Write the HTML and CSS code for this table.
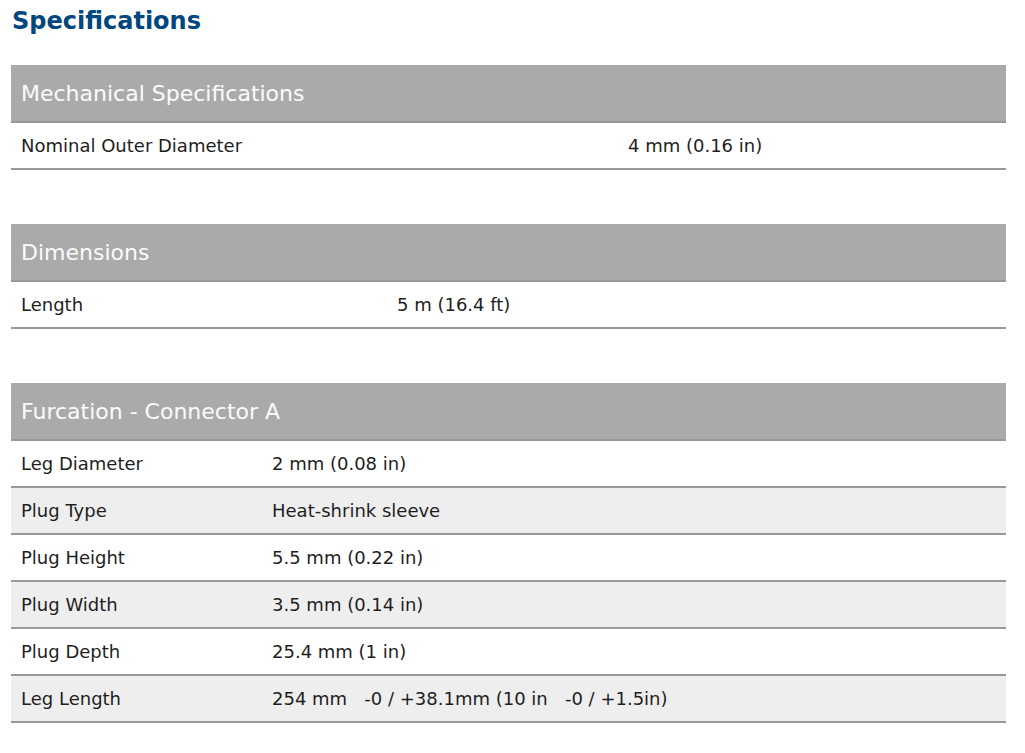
FILE: index.html
```html
<!DOCTYPE html>
<html lang="en">
<head>
<meta charset="utf-8">
<title>Specifications</title>
<link rel="stylesheet" href="styles.css">
</head>
<body>
<div class="page">
  <h2 class="title">Specifications</h2>

  <table class="spec spec-mech">
    <colgroup><col class="c-label"><col></colgroup>
    <thead><tr><th colspan="2">Mechanical Specifications</th></tr></thead>
    <tbody>
      <tr><td>Nominal Outer Diameter</td><td>4 mm (0.16 in)</td></tr>
    </tbody>
  </table>

  <table class="spec spec-dim">
    <colgroup><col class="c-label"><col></colgroup>
    <thead><tr><th colspan="2">Dimensions</th></tr></thead>
    <tbody>
      <tr><td>Length</td><td>5 m (16.4 ft)</td></tr>
    </tbody>
  </table>

  <table class="spec spec-furc">
    <colgroup><col class="c-label"><col></colgroup>
    <thead><tr><th colspan="2">Furcation - Connector A</th></tr></thead>
    <tbody>
      <tr><td>Leg Diameter</td><td>2 mm (0.08 in)</td></tr>
      <tr><td>Plug Type</td><td>Heat-shrink sleeve</td></tr>
      <tr><td>Plug Height</td><td>5.5 mm (0.22 in)</td></tr>
      <tr><td>Plug Width</td><td>3.5 mm (0.14 in)</td></tr>
      <tr><td>Plug Depth</td><td>25.4 mm (1 in)</td></tr>
      <tr><td>Leg Length</td><td>254 mm &nbsp; -0 / +38.1mm (10 in &nbsp; -0 / +1.5in)</td></tr>
    </tbody>
  </table>
</div>
</body>
</html>
```

FILE: styles.css
```css
html, body {
  margin: 0;
  padding: 0;
  background: #ffffff;
}

body {
  font-family: "DejaVu Sans", Verdana, sans-serif;
  color: #1e1e1e;
}

.page {
  padding: 0 19px 0 11px;
}

.title {
  margin: 7px 0 29px 1px;
  font-size: 24px;
  line-height: 29px;
  font-weight: bold;
  color: #00467f;
}

.spec {
  width: 995px;
  border-collapse: collapse;
  table-layout: fixed;
  margin-bottom: 54px;
}

.spec th {
  background: #aaaaaa;
  color: #fbfbfb;
  font-weight: normal;
  font-size: 22px;
  line-height: 26px;
  text-align: left;
  padding: 16px 10px 14px;
  border-bottom: 2px solid #999999;
}

.spec td {
  font-size: 18px;
  line-height: 21px;
  padding: 12px 10px;
  border-bottom: 2px solid #999999;
  white-space: pre-wrap;
}

.spec tbody tr:nth-child(even) td {
  background: #eeeeee;
}

.spec-mech .c-label { width: 607px; }
.spec-dim .c-label { width: 376px; }
.spec-furc .c-label { width: 251px; }
```
